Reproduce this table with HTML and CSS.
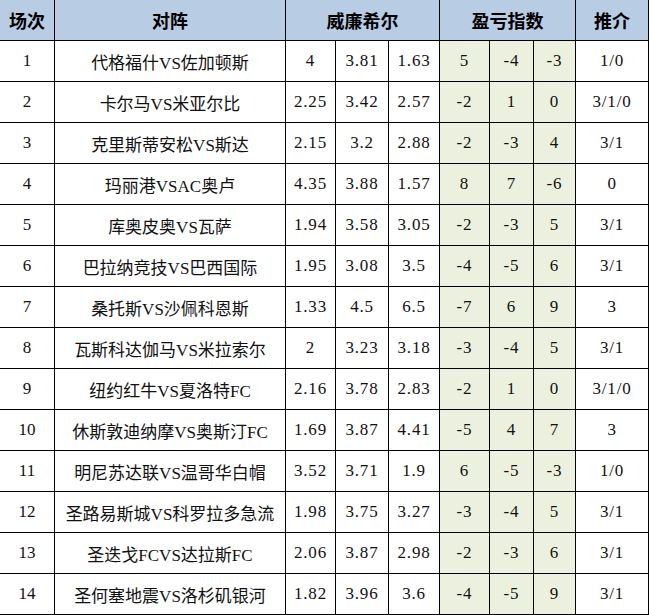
FILE: index.html
```html
<!DOCTYPE html>
<html lang="zh">
<head>
<meta charset="utf-8">
<link rel="stylesheet" href="styles.css">
</head>
<body>
<table class="tbl">
  <colgroup>
    <col class="c-no"><col class="c-match"><col class="c-w1"><col class="c-w2"><col class="c-w3"><col class="c-p1"><col class="c-p2"><col class="c-p3"><col class="c-tip">
  </colgroup>
  <thead>
    <tr class="head">
      <th>场次</th><th>对阵</th><th colspan="3">威廉希尔</th><th colspan="3">盈亏指数</th><th>推介</th>
    </tr>
  </thead>
  <tbody>
    <tr><td>1</td><td>代格福什VS佐加顿斯</td><td class="n">4</td><td class="n">3.81</td><td class="n">1.63</td><td class="g">5</td><td class="g">-4</td><td class="g">-3</td><td class="n">1/0</td></tr>
    <tr><td>2</td><td>卡尔马VS米亚尔比</td><td class="n">2.25</td><td class="n">3.42</td><td class="n">2.57</td><td class="g">-2</td><td class="g">1</td><td class="g">0</td><td class="n">3/1/0</td></tr>
    <tr><td>3</td><td>克里斯蒂安松VS斯达</td><td class="n">2.15</td><td class="n">3.2</td><td class="n">2.88</td><td class="g">-2</td><td class="g">-3</td><td class="g">4</td><td class="n">3/1</td></tr>
    <tr><td>4</td><td>玛丽港VSAC奥卢</td><td class="n">4.35</td><td class="n">3.88</td><td class="n">1.57</td><td class="g">8</td><td class="g">7</td><td class="g">-6</td><td class="n">0</td></tr>
    <tr><td>5</td><td>库奥皮奥VS瓦萨</td><td class="n">1.94</td><td class="n">3.58</td><td class="n">3.05</td><td class="g">-2</td><td class="g">-3</td><td class="g">5</td><td class="n">3/1</td></tr>
    <tr><td>6</td><td>巴拉纳竞技VS巴西国际</td><td class="n">1.95</td><td class="n">3.08</td><td class="n">3.5</td><td class="g">-4</td><td class="g">-5</td><td class="g">6</td><td class="n">3/1</td></tr>
    <tr><td>7</td><td>桑托斯VS沙佩科恩斯</td><td class="n">1.33</td><td class="n">4.5</td><td class="n">6.5</td><td class="g">-7</td><td class="g">6</td><td class="g">9</td><td class="n">3</td></tr>
    <tr><td>8</td><td>瓦斯科达伽马VS米拉索尔</td><td class="n">2</td><td class="n">3.23</td><td class="n">3.18</td><td class="g">-3</td><td class="g">-4</td><td class="g">5</td><td class="n">3/1</td></tr>
    <tr><td>9</td><td>纽约红牛VS夏洛特FC</td><td class="n">2.16</td><td class="n">3.78</td><td class="n">2.83</td><td class="g">-2</td><td class="g">1</td><td class="g">0</td><td class="n">3/1/0</td></tr>
    <tr><td>10</td><td>休斯敦迪纳摩VS奥斯汀FC</td><td class="n">1.69</td><td class="n">3.87</td><td class="n">4.41</td><td class="g">-5</td><td class="g">4</td><td class="g">7</td><td class="n">3</td></tr>
    <tr><td>11</td><td>明尼苏达联VS温哥华白帽</td><td class="n">3.52</td><td class="n">3.71</td><td class="n">1.9</td><td class="g">6</td><td class="g">-5</td><td class="g">-3</td><td class="n">1/0</td></tr>
    <tr><td>12</td><td>圣路易斯城VS科罗拉多急流</td><td class="n">1.98</td><td class="n">3.75</td><td class="n">3.27</td><td class="g">-3</td><td class="g">-4</td><td class="g">5</td><td class="n">3/1</td></tr>
    <tr><td>13</td><td>圣迭戈FCVS达拉斯FC</td><td class="n">2.06</td><td class="n">3.87</td><td class="n">2.98</td><td class="g">-2</td><td class="g">-3</td><td class="g">6</td><td class="n">3/1</td></tr>
    <tr><td>14</td><td>圣何塞地震VS洛杉矶银河</td><td class="n">1.82</td><td class="n">3.96</td><td class="n">3.6</td><td class="g">-4</td><td class="g">-5</td><td class="g">9</td><td class="n">3/1</td></tr>
  </tbody>
</table>
</body>
</html>
```

FILE: styles.css
```css
html, body {
  margin: 0;
  padding: 0;
  background: #ffffff;
}

.tbl {
  margin: -1px 0 0 -1px;
  width: 650px;
  table-layout: fixed;
  border-collapse: collapse;
  font-family: "Liberation Serif", "Noto Sans CJK SC", serif;
  font-size: 17px;
  color: #111;
}

.c-no { width: 55px; }
.c-match { width: 231px; }
.c-w1 { width: 50px; }
.c-w2 { width: 53px; }
.c-w3 { width: 51px; }
.c-p1 { width: 50px; }
.c-p2 { width: 44px; }
.c-p3 { width: 42px; }
.c-tip { width: 73px; }

.tbl th,
.tbl td {
  border: 1px solid #000;
  padding: 0;
  text-align: center;
  vertical-align: middle;
  white-space: nowrap;
  overflow: hidden;
}

.tbl tr {
  height: 41px;
}

.head th {
  background: #b8cce4;
  font-weight: bold;
  font-size: 18px;
  color: #000;
}

.tbl td.n {
  letter-spacing: 0.8px;
}

.tbl td.g {
  background: #ebf1de;
  letter-spacing: 1px;
}
```
